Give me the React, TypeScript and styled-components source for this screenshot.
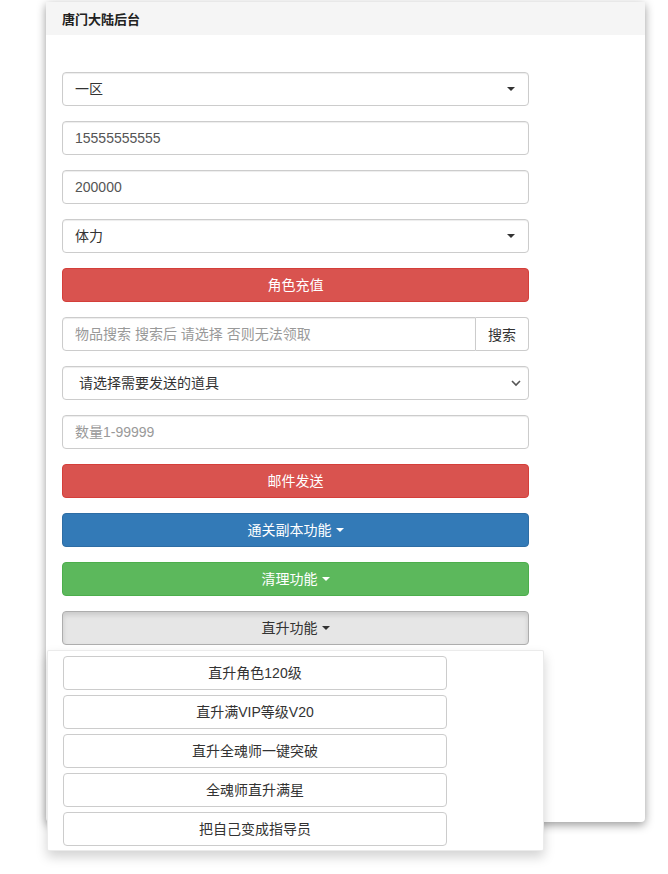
import React from "react";
import styled, { createGlobalStyle, css } from "styled-components";

const Global = createGlobalStyle`
  html, body { margin: 0; padding: 0; background: #fff; }
  body {
    min-height: 874px;
    font-family: "Liberation Sans", "Noto Sans CJK SC", sans-serif;
    font-size: 14px;
    color: #333;
  }
  #root { min-height: 874px; }
  * { box-sizing: border-box; }
`;

const Panel = styled.div`
  margin: 2px 0 0 46px;
  width: 599px;
  height: 820px;
  background: #fff;
  border-radius: 0 0 4px 4px;
  box-shadow: 0 3px 10px rgba(0, 0, 0, 0.4);
`;

const PanelHeading = styled.div`
  height: 33px;
  background: #f5f5f5;
  padding: 0 16px;
  display: flex;
  align-items: center;
  font-size: 13px;
  font-weight: bold;
  color: #222;
`;

const PanelBody = styled.div`
  padding: 37px 16px 0;
`;

const Form = styled.div`
  width: 467px;
  display: flex;
  flex-direction: column;
  gap: 15px;
`;

const controlBase = css`
  height: 34px;
  width: 100%;
  border: 1px solid #ccc;
  border-radius: 4px;
  background: #fff;
  box-shadow: inset 0 1px 1px rgba(0, 0, 0, 0.075);
  font-family: inherit;
  font-size: 14px;
  line-height: 20px;
  color: #555;
  padding: 0 12px 1px;
  display: flex;
  align-items: center;
`;

const FakeSelect = styled.div<{ $native?: boolean }>`
  ${controlBase}
  justify-content: space-between;
  color: #333;
  padding-left: ${(p) => (p.$native ? "16px" : "12px")};
  padding-right: ${(p) => (p.$native ? "6px" : "12px")};
`;

const Input = styled.div<{ $placeholder?: boolean; $grouped?: boolean }>`
  ${controlBase}
  color: ${(p) => (p.$placeholder ? "#999" : "#555")};
  ${(p) =>
    p.$grouped &&
    css`
      border-radius: 4px 0 0 4px;
      flex: 1;
    `}
`;

const InputGroup = styled.div`
  display: flex;
  height: 34px;
`;

const AddonButton = styled.div`
  height: 34px;
  width: 53px;
  border: 1px solid #ccc;
  border-left: none;
  border-radius: 0 4px 4px 0;
  background: #fff;
  display: flex;
  align-items: center;
  justify-content: center;
  padding-bottom: 1px;
  color: #333;
`;

type Variant = "danger" | "primary" | "success" | "active" | "default";

const variants: Record<Variant, ReturnType<typeof css>> = {
  danger: css`
    background: #d9534f;
    border-color: #d43f3a;
    color: #fff;
  `,
  primary: css`
    background: #337ab7;
    border-color: #2e6da4;
    color: #fff;
  `,
  success: css`
    background: #5cb85c;
    border-color: #4cae4c;
    color: #fff;
  `,
  active: css`
    background: #e6e6e6;
    border-color: #adadad;
    color: #333;
    box-shadow: inset 0 3px 5px rgba(0, 0, 0, 0.125);
  `,
  default: css`
    background: #fff;
    border-color: #ccc;
    color: #333;
  `,
};

const Button = styled.div<{ $variant: Variant; $width?: number }>`
  height: 34px;
  width: ${(p) => (p.$width ? `${p.$width}px` : "100%")};
  border: 1px solid;
  border-radius: 4px;
  display: flex;
  align-items: center;
  justify-content: center;
  padding-bottom: 1px;
  font-size: 14px;
  line-height: 20px;
  ${(p) => variants[p.$variant]}
`;

const Caret = styled.span`
  display: inline-block;
  width: 0;
  height: 0;
  margin-left: 4px;
  border-top: 4px solid currentColor;
  border-left: 4px solid transparent;
  border-right: 4px solid transparent;
`;

const Dropdown = styled.div`
  position: relative;
`;

const Menu = styled.div`
  position: absolute;
  left: -15px;
  top: 39px;
  width: 497px;
  height: 201px;
  background: #fff;
  border: 1px solid rgba(0, 0, 0, 0.08);
  border-radius: 2px;
  box-shadow: 0 6px 12px rgba(0, 0, 0, 0.175);
  padding: 5px 0 0 15px;
  display: flex;
  flex-direction: column;
  gap: 5px;
  z-index: 10;
`;

const SelectCaret = () => (
  <svg width="10" height="6" viewBox="0 0 10 6">
    <path d="M1 1h8L5 5z" fill="#333" />
  </svg>
);

const Chevron = () => (
  <svg width="12" height="8" viewBox="0 0 12 8">
    <path d="M2 2l4 4 4-4" fill="none" stroke="#555" strokeWidth="1.6" />
  </svg>
);

const menuItems = [
  "直升角色120级",
  "直升满VIP等级V20",
  "直升全魂师一键突破",
  "全魂师直升满星",
  "把自己变成指导员",
];

export default function App() {
  return (
    <>
      <Global />
      <Panel>
        <PanelHeading>唐门大陆后台</PanelHeading>
        <PanelBody>
          <Form>
            <FakeSelect>
              <span>一区</span>
              <SelectCaret />
            </FakeSelect>
            <Input>15555555555</Input>
            <Input>200000</Input>
            <FakeSelect>
              <span>体力</span>
              <SelectCaret />
            </FakeSelect>
            <Button $variant="danger">角色充值</Button>
            <InputGroup>
              <Input $grouped $placeholder>
                物品搜索 搜索后 请选择 否则无法领取
              </Input>
              <AddonButton>搜索</AddonButton>
            </InputGroup>
            <FakeSelect $native>
              <span>请选择需要发送的道具</span>
              <Chevron />
            </FakeSelect>
            <Input $placeholder>数量1-99999</Input>
            <Button $variant="danger">邮件发送</Button>
            <Button $variant="primary">
              通关副本功能
              <Caret />
            </Button>
            <Button $variant="success">
              清理功能
              <Caret />
            </Button>
            <Dropdown>
              <Button $variant="active">
                直升功能
                <Caret />
              </Button>
              <Menu>
                {menuItems.map((t) => (
                  <Button key={t} $variant="default" $width={384}>
                    {t}
                  </Button>
                ))}
              </Menu>
            </Dropdown>
          </Form>
        </PanelBody>
      </Panel>
    </>
  );
}
